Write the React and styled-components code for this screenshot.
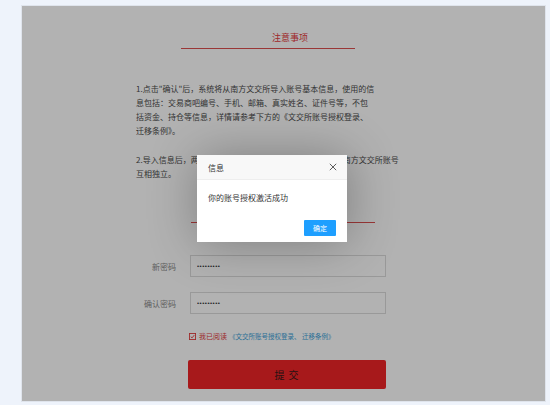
import React from "react"
import styled, { createGlobalStyle } from 'styled-components'

const GlobalStyle = createGlobalStyle`
  html, body {
    margin: 0;
    padding: 0;
    background: #eef3fb;
    font-family: "Noto Sans CJK SC", "Noto Sans", sans-serif;
  }
`

const Page = styled.div`
  width: 550px;
  height: 405px;
  padding: 5px 4px 0 21px;
  box-sizing: border-box;
`

const Panel = styled.div`
  position: relative;
  width: 525px;
  height: 397px;
  box-sizing: border-box;
  background: #fff;
  border: 1px solid #dfe4ec;
  padding: 26px 0 0 114px;
`

const Column = styled.div`
  width: 252px;
  display: flex;
  flex-direction: column;
`

const SectionTitle = styled.div`
  margin-left: ${p => p.$left}px;
  margin-top: ${p => p.$top}px;
  width: ${p => p.$width}px;
  padding-left: ${p => p.$shift}px;
  box-sizing: border-box;
  font-size: 9px;
  line-height: 12px;
  padding-bottom: 4px;
  text-align: center;
  color: #e4393c;
  border-bottom: 1px solid #dd5050;
`

const Para = styled.p`
  margin: ${p => p.$top}px 0 0;
  font-size: 8px;
  line-height: 14px;
  color: #4a4a4a;
  white-space: nowrap;
`

const FormRow = styled.div`
  display: flex;
  align-items: center;
  margin-top: ${p => p.$top}px;
`

const Label = styled.label`
  width: 41px;
  margin-left: -1px;
  text-align: right;
  font-size: 8px;
  color: #888;
`

const Input = styled.input`
  margin-left: 14px;
  width: 196px;
  height: 22px;
  box-sizing: border-box;
  border: 1px solid #dcdcdc;
  padding: 0 6px;
  font-size: 6px;
  letter-spacing: 0.5px;
  color: #333;
  background: #fff;
  outline: none;
`

const AgreeRow = styled.div`
  display: flex;
  align-items: center;
  margin: 16px 0 0 53px;
  height: 12px;
  font-size: 7px;
  white-space: nowrap;
`

const Check = styled.span`
  width: 7px;
  height: 7px;
  display: flex;
  margin-right: 3px;
`

const Red = styled.span`
  color: #e23a3a;
  margin-right: 2px;
`

const Blue = styled.span`
  color: #3d9fd8;
  font-size: 6.5px;
`

const Submit = styled.button`
  margin: 18px 0 0 52px;
  width: 198px;
  height: 29px;
  border: none;
  border-radius: 2px;
  background: #f02427;
  color: #3a1a1a;
  font-family: inherit;
  font-size: 10px;
  letter-spacing: 1px;
`

const Shade = styled.div`
  position: absolute;
  inset: 0;
  background: rgba(0, 0, 0, 0.3);
`

const Dialog = styled.div`
  position: absolute;
  left: 175px;
  top: 149px;
  width: 150px;
  height: 87px;
  background: #fff;
  box-shadow: 1px 1px 50px rgba(0, 0, 0, 0.3);
  display: flex;
  flex-direction: column;
`

const DialogHead = styled.div`
  height: 25px;
  background: #f8f8f8;
  border-bottom: 1px solid #eee;
  box-sizing: border-box;
  display: flex;
  align-items: center;
  justify-content: space-between;
  padding: 0 10px 0 11px;
  font-size: 8px;
  color: #333;
`

const Close = styled.svg`
  width: 8px;
  height: 8px;
`

const DialogBody = styled.div`
  padding: 13px 11px 0;
  font-size: 8px;
  color: #333;
  line-height: 10px;
`

const DialogFoot = styled.div`
  margin-top: auto;
  display: flex;
  justify-content: flex-end;
  padding: 0 11px 6px;
`

const OkButton = styled.button`
  width: 32px;
  height: 16px;
  border: none;
  border-radius: 1px;
  background: #1e9fff;
  color: #fff;
  font-family: inherit;
  font-size: 7px;
  padding: 0;
`

function App() {
  return (
    <Page>
      <GlobalStyle />
      <Panel>
        <Column>
          <SectionTitle $left={45} $top={0} $width={174} $shift={44}>注意事项</SectionTitle>
          <Para $top={33}>
            1.点击"确认"后，系统将从南方文交所导入账号基本信息，使用的信<br />
            息包括：交易商吧编号、手机、邮箱、真实姓名、证件号等，不包<br />
            括资金、持仓等信息，详情请参考下方的《文交所账号授权登录、<br />
            迁移条例》。
          </Para>
          <Para $top={15}>
            2.导入信息后，两个账号的信息修改互不影响，本站账号与南方文交所账号<br />
            互相独立。
          </Para>
          <SectionTitle $left={55} $top={25} $width={184} $shift={0}>设置密码</SectionTitle>
          <FormRow $top={32}>
            <Label>新密码</Label>
            <Input type="password" defaultValue="123456789" readOnly />
          </FormRow>
          <FormRow $top={15}>
            <Label>确认密码</Label>
            <Input type="password" defaultValue="123456789" readOnly />
          </FormRow>
          <AgreeRow>
            <Check>
              <svg viewBox="0 0 8 8" width="7" height="7">
                <rect x="0.5" y="0.5" width="7" height="7" fill="#fff" stroke="#e23a3a" />
                <path d="M2 4.2 L3.5 5.6 L6 2.4" fill="none" stroke="#e23a3a" strokeWidth="1" />
              </svg>
            </Check>
            <Red>我已阅读</Red>
            <Blue>《文交所账号授权登录、 迁移条例》</Blue>
          </AgreeRow>
          <Submit>提 交</Submit>
        </Column>
        <Shade />
        <Dialog>
          <DialogHead>
            信息
            <Close viewBox="0 0 10 10">
              <path d="M1 1 L9 9 M9 1 L1 9" stroke="#333" strokeWidth="1" />
            </Close>
          </DialogHead>
          <DialogBody>你的账号授权激活成功</DialogBody>
          <DialogFoot>
            <OkButton>确定</OkButton>
          </DialogFoot>
        </Dialog>
      </Panel>
    </Page>
  )
}

export default App
